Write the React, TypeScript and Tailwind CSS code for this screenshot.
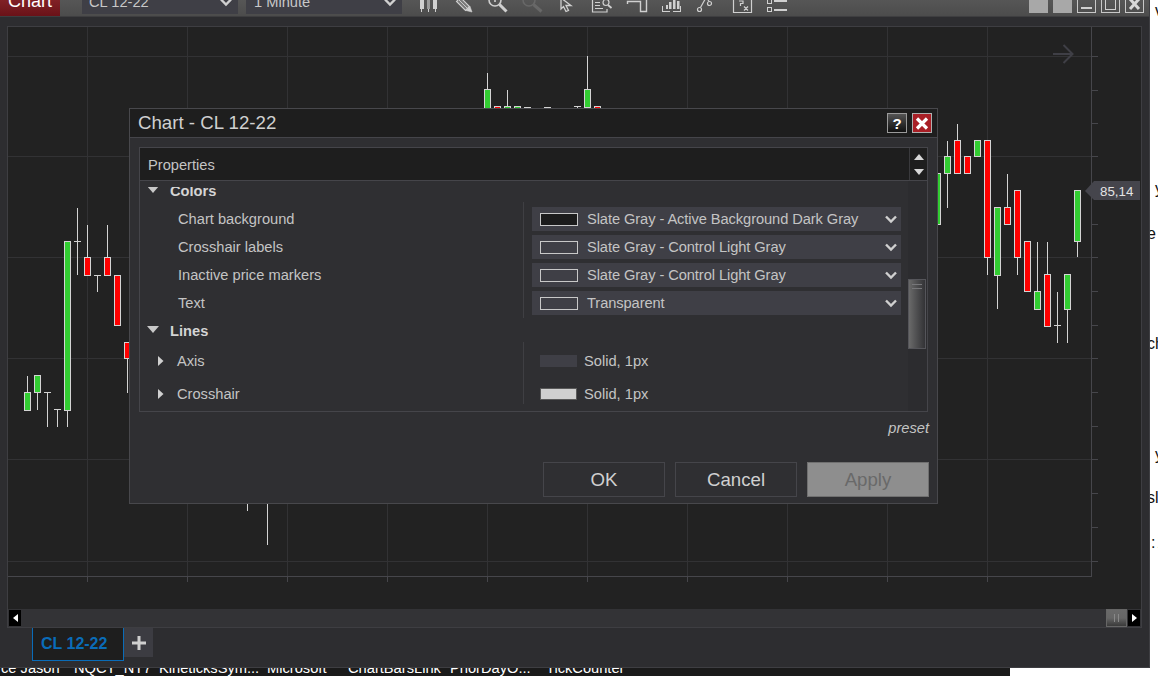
import React from "react";

type Candle = [number, number, number, number, number, "g" | "r" | "d"];

// x, wick top, body top, body bottom, wick bottom, colour
const candles: Candle[] = [
  [27, 376, 392, 410, 410, "g"],
  [37, 375, 375, 392, 410, "g"],
  [47, 392, 392, 392, 427, "d"],
  [57, 409, 409, 409, 427, "d"],
  [67, 241, 241, 410, 427, "g"],
  [77, 208, 241, 241, 275, "d"],
  [87, 225, 257, 275, 275, "r"],
  [97, 275, 275, 275, 292, "d"],
  [107, 225, 257, 275, 275, "r"],
  [117, 275, 275, 325, 325, "r"],
  [127, 342, 342, 358, 393, "r"],
  [247, 490, 490, 490, 511, "d"],
  [267, 490, 490, 490, 545, "d"],
  [487, 73, 89, 125, 125, "g"],
  [497, 106, 106, 125, 125, "r"],
  [507, 90, 106, 125, 125, "g"],
  [517, 106, 106, 125, 125, "g"],
  [527, 107, 107, 107, 125, "d"],
  [547, 107, 107, 107, 125, "d"],
  [577, 106, 106, 106, 125, "d"],
  [587, 56, 89, 107, 125, "g"],
  [597, 106, 106, 125, 125, "r"],
  [937, 173, 173, 224, 224, "g"],
  [947, 141, 156, 173, 208, "g"],
  [957, 124, 140, 173, 173, "r"],
  [967, 156, 156, 173, 173, "r"],
  [977, 140, 140, 156, 156, "g"],
  [987, 140, 140, 257, 275, "r"],
  [997, 207, 207, 275, 309, "g"],
  [1007, 174, 207, 224, 224, "r"],
  [1017, 190, 190, 257, 275, "r"],
  [1027, 241, 241, 291, 291, "r"],
  [1037, 242, 291, 309, 309, "g"],
  [1047, 242, 274, 326, 326, "r"],
  [1057, 292, 325, 325, 343, "d"],
  [1067, 274, 274, 309, 343, "g"],
  [1077, 190, 190, 241, 257, "g"],
];

const vGrid = [87, 187, 287, 387, 487, 587, 687, 787, 887, 987];
const hGrid = [56, 156, 257, 358, 459, 561];
const ticks = [56, 90, 123, 156, 190, 224, 257, 291, 325, 358, 392, 426, 459, 493, 527, 561];

// svg coordinates are page coordinates, the panel starts at 8,27
const ChartPlot = () => (
  <svg width="1133" height="582" viewBox="8 27 1133 582" className="block">
    {vGrid.map((x) => (
      <g key={x}>
        <line x1={x + 0.5} x2={x + 0.5} y1={27} y2={576} stroke="#323234" />
        <line x1={x + 0.5} x2={x + 0.5} y1={576} y2={582} stroke="#46464b" />
      </g>
    ))}
    {hGrid.map((y) => (
      <line key={y} x1={8} x2={1092} y1={y + 0.5} y2={y + 0.5} stroke="#323234" />
    ))}
    {ticks.map((y) => (
      <line key={y} x1={1092} x2={1098} y1={y + 0.5} y2={y + 0.5} stroke="#46464b" />
    ))}
    <line x1={8} x2={1092} y1={576.5} y2={576.5} stroke="#46464b" />
    <line x1={1091.5} x2={1091.5} y1={27} y2={577} stroke="#46464b" />
    {candles.map(([x, wt, bt, bb, wb, c]) => (
      <g key={x}>
        <line x1={x + 0.5} x2={x + 0.5} y1={wt} y2={wb} stroke="#d4d4d4" />
        {c === "d" ? (
          <line x1={x - 3} x2={x + 4} y1={bt + 0.5} y2={bt + 0.5} stroke="#d4d4d4" />
        ) : (
          <rect
            x={x - 2.5}
            y={bt + 0.5}
            width={6}
            height={bb - bt}
            fill={c === "g" ? "#32cd32" : "#ff0000"}
            stroke="#d4d4d4"
          />
        )}
      </g>
    ))}
    <path d="M1053 54h19M1063.5 45l9 9-9 9" fill="none" stroke="#3f3f46" strokeWidth="2" />
    <path d="M1085 191l9-10h46v19h-46z" fill="#45454c" />
    <text x="1100" y="196" fontSize="13.3" fill="#e4e4e4" fontFamily="Liberation Sans, sans-serif">
      85,14
    </text>
  </svg>
);

const Chevron = () => (
  <svg width="12" height="9" viewBox="0 0 12 9" className="shrink-0">
    <path d="M1 1.5l5 5 5-5" fill="none" stroke="#d0d0d0" strokeWidth="2.4" />
  </svg>
);

const toolIcon = "#d0d0d0";

// one strip for the toolbar icons, drawn in page coordinates, the window edge cuts the tops
const ToolIcons = () => (
  <svg width="385" height="20" viewBox="412 -7 385 20" className="block">
    <g fill={toolIcon}>
      <rect x="420" y="-2" width="4" height="11" />
      <rect x="427" y="-2" width="3" height="11" fill="#9a9a9a" />
      <rect x="433" y="-2" width="4" height="11" />
      <path d="M421 9h1v3h-1zM428 9h1v3h-1zM435 9h1v3h-1z" />
    </g>
    <g fill="none" stroke={toolIcon}>
      <path d="M456.500 1.500l4-4 9 9-4 4z" strokeWidth="1.100" fill="#7a7a7a" />
      <path d="M458.500 -0.500l9 9" strokeWidth="0.900" />
      <path d="M466 10.500l6 1.500-2-5.500z" fill={toolIcon} strokeWidth="0.600" />
    </g>
    <g fill="none" stroke={toolIcon}>
      <circle cx="495" cy="0" r="6" strokeWidth="1.600" />
      <path d="M495 -1v3" strokeWidth="1.600" />
      <path d="M499.500 4.500l7 7" strokeWidth="3" />
    </g>
    <g fill="none" stroke="#686868">
      <circle cx="529" cy="0" r="6" strokeWidth="1.600" />
      <path d="M533.500 4.500l8 7" strokeWidth="3" />
    </g>
    <path d="M561 -2v11l2.500-2.500 2.500 5 2.500-1-2.500-5h5z" fill="none" stroke={toolIcon} strokeWidth="1.300" />
    <g fill="none" stroke={toolIcon} strokeWidth="1.200">
      <path d="M592.500 -2v14h14.500V9" />
      <path d="M595 2.500h5M595 5.500h5M595 8.500h8" />
      <circle cx="606" cy="2.500" r="3" />
      <path d="M608 5l3.500 3" strokeWidth="1.800" />
    </g>
    <path d="M627.500 4V1.500H640.500V11.500H646.500V-2" fill="none" stroke={toolIcon} strokeWidth="1.400" />
    <g fill={toolIcon}>
      <rect x="666" y="5" width="2" height="4" />
      <rect x="669" y="2" width="2.500" height="7" />
      <rect x="673" y="-2" width="2.500" height="11" />
      <rect x="677" y="1" width="2.500" height="8" />
      <path d="M662 6h1v5h7v1h-8zM681 6h-1v5h-7v1h8z" />
    </g>
    <g fill="none" stroke={toolIcon} strokeWidth="1.200">
      <circle cx="699.500" cy="9.500" r="2" />
      <circle cx="709.500" cy="3.500" r="2" />
      <circle cx="706" cy="-3" r="1.500" />
      <path d="M700.500 7.500l5-9M707 -2l2 3.500" />
    </g>
    <g fill="none" stroke={toolIcon} strokeWidth="1.200">
      <path d="M733.500 -2V12.500H751.500V-2" />
      <path d="M739 1h4v2.500h-2.500v2.500M744 6.500l4 4M748 6.500l-4 4" />
    </g>
    <g fill="none" stroke={toolIcon}>
      <rect x="767.500" y="-0.500" width="4" height="4" />
      <rect x="767.500" y="7.500" width="4" height="4" />
      <path d="M774 1h13M774 10h13" strokeWidth="2" />
    </g>
  </svg>
);

const Toolbar = () => (
  <div className="flex h-[17px] items-end overflow-hidden border-b border-[#3e3e40] bg-gradient-to-b from-[#565656] to-[#4c4c4c]">
    <div className="flex h-[26px] w-[60px] shrink-0 items-center justify-center bg-gradient-to-b from-[#8f2a2f] to-[#6a1218] pb-[4px] text-[18px] text-white">
      Chart
    </div>
    <div className="mb-[2px] ml-[22px] flex h-[24px] w-[156px] shrink-0 items-center justify-between bg-[#3f3f46] pl-[7px] pr-[6px] text-[14.67px] text-[#c8c8c8]">
      CL 12-22
      <Chevron />
    </div>
    <div className="mb-[2px] ml-[8px] flex h-[24px] w-[156px] shrink-0 items-center justify-between bg-[#3f3f46] pl-[8px] pr-[6px] text-[14.67px] text-[#c8c8c8]">
      1 Minute
      <Chevron />
    </div>
    <div className="mb-[3px] ml-[10px] shrink-0">
      <ToolIcons />
    </div>
    <div className="mb-[3px] ml-auto mr-[5px] flex shrink-0 gap-[5px]">
      <div className="h-[18px] w-[19px] bg-[#a8a8a8]" />
      <div className="h-[18px] w-[19px] bg-[#a8a8a8]" />
      <div className="flex h-[18px] w-[19px] items-end justify-center border border-[#c8c8c8] pb-[3px]">
        <div className="h-[2px] w-[11px] bg-[#d0d0d0]" />
      </div>
      <div className="flex h-[18px] w-[19px] items-end justify-center border border-[#c8c8c8] pb-[2px]">
        <div className="h-[12px] w-[11px] border border-[#d0d0d0]" />
      </div>
      <div className="flex h-[18px] w-[19px] items-center justify-center border border-[#c8c8c8]">
        <svg width="13" height="12" viewBox="0 0 13 12">
          <path d="M2 1l9 10M11 1l-9 10" stroke="#d8d8d8" strokeWidth="3" />
        </svg>
      </div>
    </div>
  </div>
);

const ColorRow = ({ label, value, fill }: { label: string; value: string; fill: string }) => (
  <div className="flex h-[28px] items-center">
    <div className="w-[384px] pl-[38px] text-[14.67px] text-[#c4c4c4]">{label}</div>
    <div className="ml-[8px] flex h-[24px] w-[369px] items-center bg-[#3f3f46] pl-[8px] pr-[4px] text-[14.67px] text-[#c4c4c4]">
      <div className={`h-[13px] w-[38px] shrink-0 border border-[#c8c8c8] ${fill}`} />
      <span className="ml-[9px] flex-1 tracking-[-0.08px]">{value}</span>
      <Chevron />
    </div>
  </div>
);

const LineRow = ({ label, swatch, h }: { label: string; swatch: string; h: string }) => (
  <div className={`flex items-center ${h}`}>
    <div className="flex w-[384px] items-center text-[14.67px] text-[#c4c4c4]">
      <svg width="6" height="10" viewBox="0 0 6 10" className="ml-[18px]">
        <path d="M0 0l5.500 5L0 10z" fill="#d0d0d0" />
      </svg>
      <span className="ml-[13px]">{label}</span>
    </div>
    <div className="ml-[16px] flex items-center text-[14.67px] text-[#c4c4c4]">
      <div className={`h-[12px] w-[37px] ${swatch}`} />
      <span className="ml-[7px]">Solid, 1px</span>
    </div>
  </div>
);

const SectionHead = ({ label, className = "" }: { label: string; className?: string }) => (
  <div className={`flex items-center text-[14.67px] font-bold text-[#d4d4d4] ${className}`}>
    <svg width="12" height="7" viewBox="0 0 12 7" className="mb-[4px] ml-[7px]">
      <path d="M0 0h12L6 7z" fill="#c8c8c8" />
    </svg>
    <span className="ml-[11px]">{label}</span>
  </div>
);

const Dialog = () => (
  <div className="absolute left-[129px] top-[108px] flex h-[396px] w-[809px] flex-col border border-[#48484c] bg-[#2f2f32]">
    <div className="flex h-[29px] shrink-0 items-center justify-between border-b border-[#45454a] bg-[#1e1e1e] pl-[8px] pr-[5px] text-[18.67px] text-[#d0d0d0]">
      Chart - CL 12-22
      <div className="flex gap-[5px]">
        <div className="flex h-[20px] w-[20px] items-center justify-center border border-[#9a9a9a] bg-gradient-to-b from-[#555] to-[#111] text-[15px] font-bold leading-none text-white">
          ?
        </div>
        <div className="flex h-[20px] w-[20px] items-center justify-center border border-[#b0b0b0] bg-[#a81f26]">
          <svg width="14" height="13" viewBox="0 0 14 13">
            <path d="M2 1.500l10 10M12 1.500l-10 10" stroke="#fff" strokeWidth="3.200" />
          </svg>
        </div>
      </div>
    </div>
    <div className="mx-[9px] mt-[9px] flex h-[265px] w-[789px] flex-col border border-[#45454a]">
      <div className="flex h-[33px] shrink-0 border-b border-[#45454a] bg-[#1e1e1e]">
        <div className="flex-1 pl-[8px] pt-[6px] text-[14.67px] text-[#c4c4c4]">Properties</div>
        <div className="flex w-[18px] flex-col items-center justify-center gap-[9px] border-l border-[#3a3a3d]">
          <svg width="10" height="6" viewBox="0 0 10 6">
            <path d="M5 0l5 6H0z" fill="#d8d8d8" />
          </svg>
          <svg width="10" height="6" viewBox="0 0 10 6">
            <path d="M0 0h10L5 6z" fill="#d8d8d8" />
          </svg>
        </div>
      </div>
      <div className="flex min-h-0 flex-1 overflow-hidden">
        <div className="relative min-h-0 flex-1 overflow-hidden">
          <div className="absolute left-[383px] top-[21px] h-[116px] w-px bg-[#3f3f43]" />
          <div className="absolute left-[383px] top-[161px] h-[62px] w-px bg-[#3f3f43]" />
          <SectionHead label="Colors" className="-mt-[4px] h-[28px]" />
          <ColorRow label="Chart background" value="Slate Gray - Active Background Dark Gray" fill="bg-[#1c1c1c]" />
          <ColorRow label="Crosshair labels" value="Slate Gray - Control Light Gray" fill="bg-[#3f3f46]" />
          <ColorRow label="Inactive price markers" value="Slate Gray - Control Light Gray" fill="bg-[#3f3f46]" />
          <ColorRow label="Text" value="Transparent" fill="bg-[#3f3f46]" />
          <SectionHead label="Lines" className="h-[28px]" />
          <LineRow label="Axis" swatch="bg-[#3f3f46]" h="h-[32px]" />
          <LineRow label="Crosshair" swatch="bg-[#d0d0d0] border border-[#5a5a5a]" h="h-[34px]" />
          {/* the scrolled rows slide under this strip */}
          <div className="absolute inset-x-0 top-0 h-[6px] bg-[#2f2f32]" />
        </div>
        <div className="w-[19px] shrink-0 bg-[#2c2c2f] pt-[98px]">
          <div className="flex h-[70px] w-[18px] justify-center border border-[#55555a] bg-gradient-to-r from-[#6a6a6a] to-[#333336] pt-[4px]">
            <div className="h-[5px] w-[10px] border-y border-[#77777a]" />
          </div>
        </div>
      </div>
    </div>
    <div className="mr-[8px] mt-[5px] text-right text-[14.67px] italic text-[#c4c4c4]">preset</div>
    <div className="mr-[8px] mt-[23px] flex justify-end gap-[10px] text-[18.67px]">
      <div className="flex h-[35px] w-[122px] items-center justify-center border border-[#45454a] text-[#d0d0d0]">OK</div>
      <div className="flex h-[35px] w-[122px] items-center justify-center border border-[#45454a] text-[#d0d0d0]">Cancel</div>
      <div className="flex h-[35px] w-[122px] items-center justify-center border border-[#707070] bg-[#8e8e8e] text-[#696969]">Apply</div>
    </div>
  </div>
);

const ScrollBar = () => (
  <div className="flex h-[18px] items-center bg-[#333336] pl-[1px] pr-[1px]">
    <div className="flex h-[16px] w-[12px] items-center justify-center bg-black">
      <svg width="5" height="8" viewBox="0 0 5 8">
        <path d="M5 0v8L0 4z" fill="#fff" />
      </svg>
    </div>
    <div className="ml-auto flex h-[18px] w-[21px] justify-center gap-[3px] border border-[#666] bg-gradient-to-b from-[#6a6a6a] via-[#666] to-[#3a3a3a] pt-[4px]">
      <div className="h-[8px] w-px bg-[#888]" />
      <div className="h-[8px] w-px bg-[#888]" />
    </div>
    <div className="ml-[1px] flex h-[16px] w-[12px] items-center justify-center bg-black">
      <svg width="5" height="8" viewBox="0 0 5 8">
        <path d="M0 0v8l5-4z" fill="#fff" />
      </svg>
    </div>
  </div>
);

const taskItems = [
  ["ce Jason", "w-[73px]"],
  ["NQCT_NT7", "w-[85px]"],
  ["KineticksSym...", "w-[108px]"],
  ["Microsoft", "w-[81px]"],
  ["ChartBarsLink", "w-[102px]"],
  ["PriorDayO...", "w-[96px]"],
  ["TickCounter", "w-[80px]"],
];

const sideText = [
  ["v", "mt-[2px] pl-[5px]"],
  ["y", "mt-[160px] pl-[5px]"],
  ["e", "mt-[27px] -ml-[3px]"],
  ["ch", "mt-[92px] -ml-[3px]"],
  ["y", "mt-[93px] pl-[5px]"],
  ["sl", "mt-[25px] -ml-[3px]"],
  [": 1", "mt-[27px] ml-px tracking-[-1.5px]"],
];

export default function App() {
  return (
    <div className="relative h-[676px] w-[1158px] overflow-hidden bg-white font-['Liberation_Sans',Arial,sans-serif]">
      <div className="flex h-[668px]">
        <div className="relative z-10 flex h-[668px] w-[1150px] shrink-0 flex-col border-b border-r border-[#3e3e42] bg-[#2d2d30]">
          <Toolbar />
          <div className="ml-[7px] mt-[9px] w-[1135px] border border-[#3e3e42] bg-[#222222]">
            <ChartPlot />
            <ScrollBar />
          </div>
          <div className="ml-[32px] flex items-start">
            <div className="flex h-[33px] w-[92px] items-center border-x border-b border-[#0a6cb8] bg-[#1e1e1e] pl-[8px] text-[16px] font-bold text-[#0a6cb8]">
              CL 12-22
            </div>
            <div className="flex h-[29px] w-[29px] items-center justify-center bg-[#3c3c42]">
              <svg width="14" height="14" viewBox="0 0 14 14">
                <path d="M7 0v14M0 7h14" stroke="#cfcfcf" strokeWidth="3" />
              </svg>
            </div>
          </div>
          <Dialog />
        </div>
        <div className="flex h-[668px] flex-1 flex-col overflow-hidden text-[16px] leading-[18px] text-[#111]">
          {sideText.map(([t, c], i) => (
            <div key={i} className={`whitespace-nowrap ${c}`}>
              {t}
            </div>
          ))}
        </div>
      </div>
      <div className="flex h-[8px] w-[1010px] items-end overflow-hidden bg-[#1a1a1a]">
        {taskItems.map(([t, w]) => (
          <div key={t} className={`h-[16px] shrink-0 whitespace-nowrap pl-[1px] text-[14.67px] leading-[16px] text-white ${w}`}>
            {t}
          </div>
        ))}
      </div>
    </div>
  );
}
